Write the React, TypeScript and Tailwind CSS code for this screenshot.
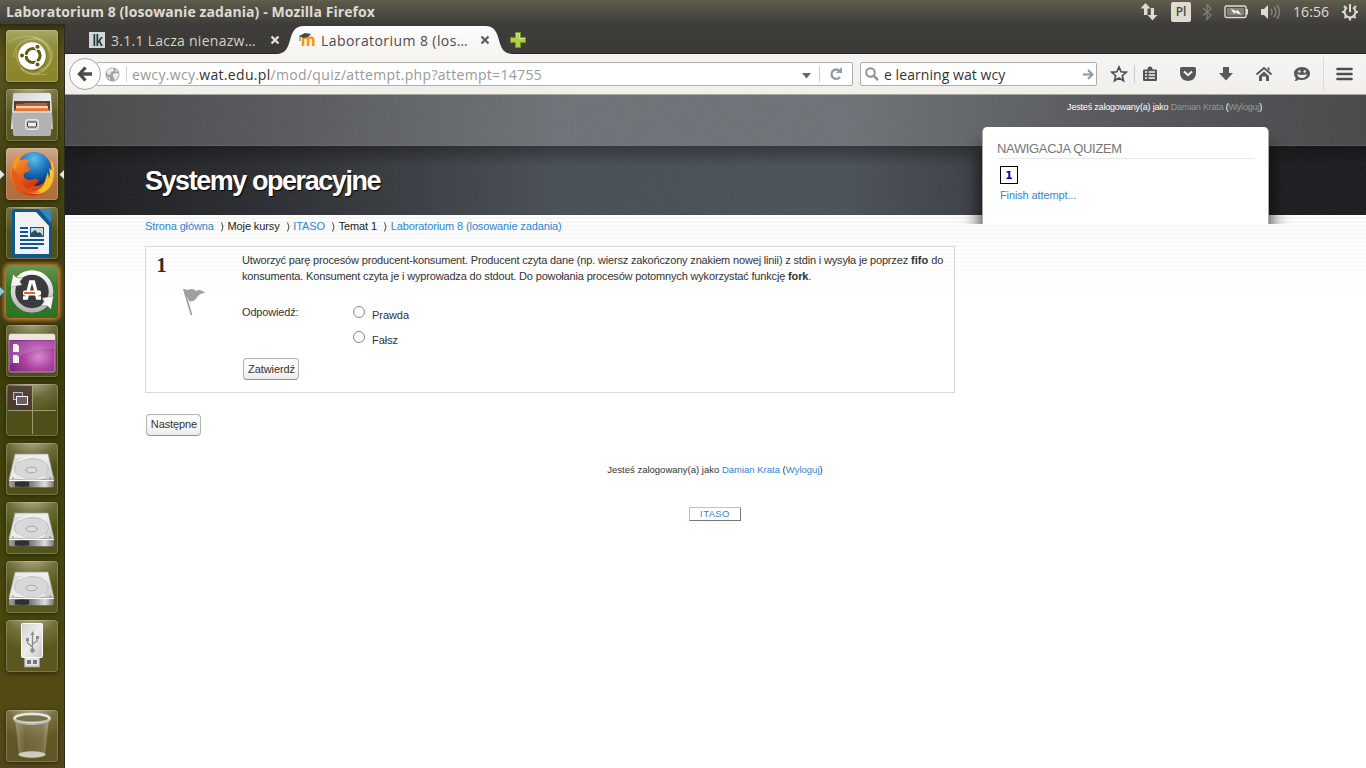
import type { ReactNode } from "react";

const DISPLAY = "font-['Open_Sans','Noto_Sans',sans-serif]";

function Tile({ bg, children, top = "", glow = false }: { bg: string; children: ReactNode; top?: string; glow?: boolean }) {
  return (
    <div
      className={`relative h-[52px] w-[52px] shrink-0 rounded-[4px] ${bg} ${top} ${
        glow ? "shadow-[0_0_4px_2px_#e0803c]" : "shadow-[inset_0_0_0_1px_rgba(255,255,255,0.2),0_1px_4px_rgba(0,0,0,0.5)]"
      }`}
    >
      <svg width="52" height="52" viewBox="0 0 52 52" className="block">
        {children}
      </svg>
    </div>
  );
}

const GLASS =
  "bg-[radial-gradient(46px_36px_at_50%_-6px,rgba(235,235,215,0.7)_0%,rgba(200,200,150,0.32)_55%,rgba(170,170,100,0.15)_100%)]";

function Drive() {
  return (
    <Tile bg={GLASS}>
      <path d="M9 11h33l6 26H3z" fill="url(#metal)" stroke="#aaa" strokeWidth=".6" />
      <path d="M10 12h31l1 3H9z" fill="#f3f3f3" opacity=".6" />
      <ellipse cx="25.500" cy="26" rx="17" ry="10.500" fill="#d8d8d8" stroke="#bababa" strokeWidth=".8" />
      <path d="M12 18l15-5M12 33c6 5 20 5 27 0" stroke="#f7f7f7" strokeWidth="1.200" fill="none" />
      <ellipse cx="25.500" cy="27" rx="5.500" ry="2.800" fill="#ddd" stroke="#a5a5a5" />
      <path d="M3 37h45v5.500q0 2-2 2H5q-2 0-2-2z" fill="url(#front)" stroke="#555" strokeWidth=".5" />
      <path d="M3 37.500h45" stroke="#fff" strokeWidth="1" />
      <rect x="9" y="39" width="14" height="4.500" fill="#303030" />
      <circle cx="7" cy="35" r=".8" fill="#777" />
      <circle cx="44" cy="35" r=".8" fill="#777" />
    </Tile>
  );
}

function Launcher() {
  return (
    <aside className="relative flex w-[65px] shrink-0 flex-col gap-[7px] border-r border-[#292a20] bg-[linear-gradient(180deg,#2f2b10_0px,#4a4516_8px,#5b551f_40px,#454411_130px,#3c3d0b_330px,#43440b_520px,#514a13_670px,#54471a_744px)] pt-[6px] pl-[6px]">
      <svg width="0" height="0" className="absolute">
        <defs>
          <linearGradient id="metal" x1="0" y1="0" x2="1" y2="1">
            <stop offset="0" stopColor="#d0d0d0" />
            <stop offset=".5" stopColor="#ededed" />
            <stop offset="1" stopColor="#c9c9c9" />
          </linearGradient>
          <linearGradient id="front">
            <stop offset="0" stopColor="#aaa" />
            <stop offset=".3" stopColor="#444" />
            <stop offset=".8" stopColor="#ddd" />
            <stop offset="1" stopColor="#777" />
          </linearGradient>
          <linearGradient id="fox" x1="0" y1="0" x2=".5" y2="1">
            <stop offset="0" stopColor="#f7a22b" />
            <stop offset=".5" stopColor="#ee6f1f" />
            <stop offset="1" stopColor="#cf3d12" />
          </linearGradient>
          <radialGradient id="globe" cx=".5" cy=".2" r=".8">
            <stop offset="0" stopColor="#5cc0ec" />
            <stop offset=".5" stopColor="#1b74bd" />
            <stop offset="1" stopColor="#0a2c66" />
          </radialGradient>
          <radialGradient id="violet" cx=".65" cy=".6" r=".7">
            <stop offset="0" stopColor="#d98ad0" />
            <stop offset=".5" stopColor="#a9409f" />
            <stop offset="1" stopColor="#7b2486" />
          </radialGradient>
          <linearGradient id="ring" x1="0" y1="0" x2="0" y2="1">
            <stop offset="0" stopColor="#fafafa" />
            <stop offset="1" stopColor="#b4b4b4" />
          </linearGradient>
          <linearGradient id="bin">
            <stop offset="0" stopColor="#fff" stopOpacity=".3" />
            <stop offset=".3" stopColor="#fff" stopOpacity=".08" />
            <stop offset=".8" stopColor="#fff" stopOpacity=".15" />
            <stop offset="1" stopColor="#fff" stopOpacity=".35" />
          </linearGradient>
        </defs>
      </svg>

      <Tile bg="bg-[linear-gradient(180deg,#aaa765_0%,#8f8c35_35%,#8a8528_100%)]">
        <g fill="none" stroke="#e4e2b0">
          <path d="M8 27C8 8 34 2 44 18c6 9-1 21-11 22" strokeWidth="2" opacity=".25" />
          <path d="M27 7C42 9 50 27 40 38c-7 8-20 8-25 0" strokeWidth="2" opacity=".3" />
          <path d="M11 20c-4 15 10 28 30 24M2 12c20-10 34-6 41 9" opacity=".35" />
        </g>
        <circle cx="26.500" cy="27" r="14" fill="#55511b" opacity=".4" />
        <circle cx="26" cy="26" r="13.800" fill="#fff" />
        <circle cx="27" cy="25.500" r="7" fill="none" stroke="#625e12" strokeWidth="3.200" />
        <path d="M27 25.500L17 25.500M27 25.500L32 34M27 25.500L32 17" stroke="#fff" strokeWidth="1.200" />
        <circle cx="27" cy="25.500" r="5.400" fill="#fff" />
        <g fill="#625e12" stroke="#fff" strokeWidth="1.100">
          <circle cx="16" cy="25.500" r="2.600" />
          <circle cx="31.500" cy="16.800" r="2.600" />
          <circle cx="31.500" cy="34.500" r="2.600" />
        </g>
      </Tile>

      <Tile bg={GLASS}>
        <path d="M7 6q0-2 2-2h34q2 0 2 2l2 34H5z" fill="url(#metal)" />
        <rect x="8" y="12" width="36" height="10" fill="#4b443e" />
        <path d="M10 15h7l1-1h23v8H10z" fill="#c65b20" />
        <path d="M10 17h32v5H10z" fill="#eb8849" />
        <path d="M10 18h32" stroke="#fff" strokeWidth="1.300" />
        <path d="M9 20h34v2H9z" fill="#e9732b" />
        <path d="M9 22h34q3 0 3 2l-1 21q0 2-2 2H9q-2 0-2-2L6 24q0-2 3-2z" fill="#b2b2b2" />
        <path d="M7 23h38" stroke="#f4f4f4" />
        <rect x="19.500" y="30.500" width="13" height="10" rx="2" fill="#c9c9c9" stroke="#e9e9e9" />
        <rect x="21.500" y="33" width="9" height="5" rx="1" fill="#eee" stroke="#333" strokeWidth="1" />
      </Tile>

      <Tile bg="bg-[linear-gradient(180deg,#cda88c,#b47547_60%,#b06c3c)]">
        <circle cx="26" cy="26" r="22" fill="url(#fox)" />
        <circle cx="28" cy="21" r="17" fill="url(#globe)" />
        <path d="M45 12c6 12 2 25-8 30 7-8 8-15 6-22l3 3z" fill="#ffd84a" />
        <path d="M45 12c2 8 1 14-2 19l-1-7-4 12c-5 8-13 9-17 7 13 8 27-1 27-17q0-9-3-14z" fill="#f9bd25" />
        <path d="M11 8c2 1 3 4 4 4 3-1 6-1 9 1-3 1-3 4-3 6l4 1-3 4c-3 0-5 2-4 5 3 4 7 3 11 2l4 1c-5 10-19 11-24 1C3 25 7 13 11 8z" fill="url(#fox)" />
        <path d="M6 20c-2 20 13 29 29 24-12-1-19-5-21-14" fill="#e4561b" opacity=".75" />
        <path d="M8 14c0-4 2-6 4-7l2 5-6 10z" fill="#f5972a" />
      </Tile>

      <Tile bg={GLASS}>
        <path d="M9 2h25l12 13v32q0 3-3 3H9q-3 0-3-3V5q0-3 3-3z" fill="#0e578f" />
        <path d="M33 2h12v14z" fill="#3983bd" />
        <path d="M9 5h21l13 14v28H9z" fill="#f2f2f2" />
        <path d="M14 21h8M14 25h8M14 29h8M14 33h24M14 37h24M14 41h18" stroke="#0e578f" strokeWidth="1.800" />
        <rect x="24.500" y="20.500" width="13" height="9" fill="#bde2f3" stroke="#0e578f" />
        <path d="M25 29v-3l4-3 3 3 2-1 3 4z" fill="#344b4e" />
        <circle cx="34.500" cy="23" r="1.500" fill="#f2d24d" />
      </Tile>

      <Tile glow bg="bg-[linear-gradient(180deg,#67954d,#377a2d_40%,#2d7226)]">
        <circle cx="26" cy="27" r="20" fill="#174414" opacity=".5" />
        <circle cx="26" cy="25.500" r="19" fill="#3b3b3d" stroke="url(#ring)" strokeWidth="4.500" />
        <path d="M4.500 21L7 8l3.500 3.500L17 12l-3 3.500 2 3.500zM47.500 30L45 43.500 41.500 40 35 39.500l3-4-2-3.500z" fill="#f4f4f4" stroke="#3d5b38" strokeWidth=".4" />
        <path d="M20.500 32L24.500 16h3l4 16M17 32h5M30 32h5" fill="none" stroke="#fff" strokeWidth="3.300" />
        <rect x="17" y="24.500" width="18" height="5" rx="1.500" fill="#fff" />
        <rect x="18" y="26" width="11" height="2" fill="#e96325" />
      </Tile>

      <Tile bg={GLASS}>
        <rect x="3" y="9" width="46" height="38" rx="2" fill="url(#violet)" stroke="#df9bd6" strokeWidth=".8" />
        <path d="M3 15v-4q0-2 2-2h42q2 0 2 2v4z" fill="#ece8d9" />
        <path d="M4 16h44v8Q20 22 4 40z" fill="#fff" opacity=".15" />
        <path d="M7 19h4l2 2v6H7zM7 30h4l2 2v6H7z" fill="#f7f4ef" />
      </Tile>

      <Tile bg={GLASS}>
        <rect x="2" y="2" width="24" height="24" fill="#4a3432" opacity=".82" />
        <path d="M26.500 2v48M2 26.500h48" stroke="#aaa97e" strokeWidth="1" opacity=".85" />
        <rect x="7.500" y="8.500" width="9" height="7" fill="#604c50" stroke="#bbb" />
        <rect x="10.500" y="12.500" width="11" height="8" fill="#725c68" stroke="#fff" />
      </Tile>

      <Drive />
      <Drive />
      <Drive />

      <Tile bg={GLASS}>
        <rect x="18.500" y="37" width="15" height="10" fill="#e1e1e1" stroke="#999" />
        <path d="M21 40h4v4h-4zM27 40h4v4h-4z" fill="#777" />
        <rect x="15.500" y="3.500" width="21" height="34" rx="1" fill="url(#metal)" stroke="#fafafa" />
        <g stroke="#8b8b8b" strokeWidth="1.300" fill="none">
          <path d="M26.500 13v17M26.500 27l-5-4v-3M26.500 24l4.500-3v-4" />
        </g>
        <path d="M24.500 15l2-4 2 4zM20 18h3v3h-3zM30 16h3v3h-3z" fill="#8b8b8b" />
        <circle cx="26.500" cy="30.500" r="2.300" fill="#8b8b8b" />
      </Tile>

      <Tile bg={GLASS} top="mt-[31px]">
        <path d="M9 8l4 37q13 6 26 0l4-37z" fill="url(#bin)" />
        <ellipse cx="26" cy="44.500" rx="13.500" ry="3.300" fill="#dedecf" opacity=".85" />
        <ellipse cx="26" cy="8.500" rx="17.500" ry="4.500" fill="#77724a" stroke="#e8e8e8" strokeWidth="2.600" />
        <path d="M8.500 10q17 8 35 0" fill="none" stroke="#b9b9b9" strokeWidth="2" />
      </Tile>

      <svg className="pointer-events-none absolute top-0 left-0" width="65" height="300" viewBox="0 24 65 300">
        <path d="M0 170l4.500 4.500L0 179zM64 170l-4.500 4.500L64 179z" fill="#e8e8e8" />
        <path d="M0 287l4.500 4.500L0 296z" fill="#7cc9ef" />
      </svg>
    </aside>
  );
}

function TopPanel() {
  return (
    <header className={`flex h-6 shrink-0 items-center bg-[linear-gradient(180deg,#64614e_0,#5b584c_2px,#4c4a43_60%,#3e3d38_100%)] pl-[6px] text-[#dfdbd2] ${DISPLAY}`}>
      <h1 className="text-[14px] leading-6 font-bold tracking-[0.080px] whitespace-nowrap">Laboratorium 8 (losowanie zadania) - Mozilla Firefox</h1>
      <svg className="ml-auto" width="18" height="18" viewBox="0 0 18 18" fill="#dfdbd2">
        <path d="M5.500 0L10.500 5.500H7.500V12H4V5.500H.5zM12.500 17.500L7.500 12H10.800V5H14V12H17.500z" />
      </svg>
      <div className="ml-[13px] flex h-5 w-5 items-center justify-center rounded-[2px] bg-[#dfdbd2] text-[12px] font-semibold text-[#4a4842]">Pl</div>
      <svg className="ml-[10px]" width="12" height="18" viewBox="0 0 12 18" fill="none" stroke="#807d75" strokeWidth="1.300">
        <path d="M2 5l8 7-4 4.500V1.500L10 5.500 2 12.500" />
      </svg>
      <svg className="ml-[11px]" width="26" height="16" viewBox="0 0 26 16">
        <rect x="1" y="2" width="21" height="11.500" rx="1.500" fill="none" stroke="#dfdbd2" strokeWidth="1.400" />
        <rect x="3" y="4" width="17" height="7.500" fill="#85827a" />
        <rect x="22" y="5" width="2" height="5.500" fill="#dfdbd2" />
        <path d="M6.500 4.300l6 3 1-1.500L17.500 11 11 8.500l-1 1.500z" fill="#f4f2ec" />
      </svg>
      <svg className="ml-[10px]" width="22" height="18" viewBox="0 0 22 18" fill="none">
        <path d="M1 6h3l4-4v14l-4-4H1z" fill="#dfdbd2" />
        <path d="M11 6q2 3 0 6M14 4q4 5 0 10M17 2q5 7 0 14" stroke="#85827a" strokeWidth="1.500" />
      </svg>
      <span className="ml-[11px] w-[37px] text-[14px] leading-6 tracking-[0.100px]">16:56</span>
      <svg className="mr-[7px] ml-[11px]" width="18" height="18" viewBox="0 0 18 18" fill="none" stroke="#dfdbd2">
        <path d="M6 4.300a5.500 5.500 0 1 0 6 0" strokeWidth="2" />
        <path d="M9 1v8" strokeWidth="2" />
        <path d="M4.500 4.500L3 3M13.500 4.500L15 3M3.500 9H1M14.500 9H17M5 13.500L3.500 15M13 13.500L14.500 15M9 15v2.500" strokeWidth="2.200" />
      </svg>
    </header>
  );
}

function Cross({ color }: { color: string }) {
  return (
    <svg width="10" height="10" viewBox="0 0 10 10">
      <path d="M1.500 1.500l7 7M8.500 1.500l-7 7" stroke={color} strokeWidth="2.300" />
    </svg>
  );
}

function Tabs() {
  return (
    <div className={`flex h-[30px] shrink-0 bg-[linear-gradient(180deg,#3d3c38_0px,#3c3b37_29px,#262522_29px)] text-[14px] ${DISPLAY}`}>
      <div className="flex w-[219px] items-center pt-[2px] pl-6 text-[#d3d1c8]">
        <div className="flex h-4 w-4 items-center justify-center bg-[#d3d7d4] text-[#1c3b40]">
          <span className="scale-x-75 text-[16px] leading-4 font-bold tracking-[-1px]">lk</span>
        </div>
        <span className="ml-[6px] w-[159px] tracking-[0.270px] whitespace-nowrap">3.1.1 Lacza nienazw…</span>
        <Cross color="#e3e1d9" />
      </div>
      <div className="relative flex w-[223px] items-center pt-[2px] text-[#4c4c4c]">
        <svg className="absolute -left-[8px] top-0" width="242" height="30" viewBox="0 0 242 30">
          <defs>
            <linearGradient id="tabFill" x1="0" y1="0" x2="0" y2="1">
              <stop offset="0" stopColor="#fdfdfd" />
              <stop offset="1" stopColor="#f5f4f3" />
            </linearGradient>
          </defs>
          <path d="M0 30C20 30 8 2 28 2H209C229 2 217 30 237 30z" fill="url(#tabFill)" />
        </svg>
        <svg className="relative ml-[15px]" width="17" height="16" viewBox="0 0 17 16">
          <path d="M4 14V8q0-2.500 2.500-2.500T9 8v6M9 8q0-2.500 2.500-2.500T14.300 8v6" fill="none" stroke="#f49a18" strokeWidth="2.700" />
          <path d="M0 4l6-3 6 1-3 3-5 1z" fill="#474747" />
          <path d="M1 4v5" stroke="#666" />
        </svg>
        <span className="relative ml-[5px] w-[159px] tracking-[0.420px] whitespace-nowrap">Laboratorium 8 (los…</span>
        <span className="relative">
          <Cross color="#5f5f5f" />
        </span>
      </div>
      <svg className="relative mt-2 ml-[3px]" width="16" height="16" viewBox="0 0 16 16">
        <path d="M5.500.5h5v5h5v5h-5v5h-5v-5h-5v-5h5z" fill="#b2cd4c" stroke="#6d9a1f" />
        <path d="M6.500 5.500v-4h3v5h5" fill="none" stroke="#d5ec83" />
      </svg>
    </div>
  );
}

function Toolbar() {
  return (
    <div className={`flex h-[41px] shrink-0 items-center border-b border-[#a8a59a] bg-[linear-gradient(180deg,#f6f5f4,#f0efed)] text-[14px] ${DISPLAY}`}>
      <div className="relative z-10 ml-1 flex h-8 w-8 shrink-0 items-center justify-center rounded-full border border-[#a5a5a1] bg-[#fcfcfb]">
        <svg width="16" height="16" viewBox="0 0 16 16">
          <path d="M8.500 1.500L2.500 8l6 6.500M3 8h12" fill="none" stroke="#4b4b4b" strokeWidth="3.300" />
        </svg>
      </div>
      <div className="-ml-[5px] flex h-6 w-[757px] items-center rounded-[2px] border border-[#b1aea8] bg-white text-[#999]">
        <svg className="ml-[8px]" width="15" height="15" viewBox="0 0 15 15">
          <circle cx="7.500" cy="7.500" r="7" fill="#a4a4a4" />
          <path d="M4 2l4-1 1 3-3 1-1 3-3-1V4zM8 7l4-1 2 1-2 5-2 1-2-4zM2 9l3 2v2l-2-2zM10 2l3 2-2 1z" fill="#ececec" />
        </svg>
        <div className="ml-[6px] h-4 w-px bg-[#d2d2d2]" />
        <span className="ml-[5px] tracking-[0.320px] whitespace-nowrap">
          ewcy.wcy.<span className="text-[#333]">wat.edu.pl</span>/mod/quiz/attempt.php?attempt=14755
        </span>
        <svg className="mt-[3px] ml-auto" width="9" height="6" viewBox="0 0 9 6">
          <path d="M0 0h9L4.500 5.500z" fill="#666" />
        </svg>
        <div className="ml-[8px] h-4 w-px bg-[#ccc]" />
        <svg className="mr-[9px] ml-[9px]" width="14" height="14" viewBox="0 0 14 14">
          <path d="M10.500 3.800A4.700 4.700 0 1 0 11 10" fill="none" stroke="#8d9cab" strokeWidth="2.300" />
          <path d="M7 6h6V0z" fill="#8d9cab" />
        </svg>
      </div>
      <div className="ml-[7px] flex h-6 w-[237px] items-center rounded-[2px] border border-[#b1aea8] bg-white text-[#333]">
        <svg className="ml-1" width="14" height="14" viewBox="0 0 14 14" fill="none" stroke="#929292" strokeWidth="2">
          <circle cx="5.500" cy="5.500" r="4.300" />
          <path d="M8.800 8.800L13 13" strokeWidth="2.500" />
        </svg>
        <span className="ml-[5px] tracking-[0.060px] whitespace-nowrap">e learning wat wcy</span>
        <svg className="mr-[2px] ml-auto" width="11" height="11" viewBox="0 0 11 11" fill="none" stroke="#8b98a8" strokeWidth="2">
          <path d="M0 5.500h9M5 1l4.500 4.500L5 10" />
        </svg>
      </div>
      <svg className="ml-[13px]" width="18" height="18" viewBox="0 0 18 18">
        <path d="M9 2l2.100 4.800 5.100.5-3.900 3.400 1.200 5.100L9 13.100l-4.500 2.700 1.200-5.100L1.800 7.300l5.100-.5z" fill="none" stroke="#4f4f4f" strokeWidth="1.700" />
      </svg>
      <div className="ml-[6px] h-[18px] w-px bg-[#c4cdd5]" />
      <svg className="ml-[7px]" width="16" height="16" viewBox="0 0 16 16">
        <path d="M2 3.500h3.500Q5.500.5 8 .5t2.500 3H14q1 0 1 1V14q0 1-1 1H2q-1 0-1-1V4.500q0-1 1-1z" fill="#555" />
        <path d="M3 6h2M6.500 6H13M3 9h2M6.500 9H13M3 12h2M6.500 12H13" stroke="#f5f5f5" strokeWidth="1.600" />
      </svg>
      <svg className="ml-[21px]" width="18" height="16" viewBox="0 0 18 16">
        <path d="M2.500 1h13q1.500 0 1.500 1.500V7q0 7-8 8-8-1-8-8V2.500Q1 1 2.500 1z" fill="#585858" />
        <path d="M5 5.500l4 3.700 4-3.700" fill="none" stroke="#f3f3f3" strokeWidth="2" />
      </svg>
      <svg className="ml-[21px]" width="16" height="16" viewBox="0 0 16 16">
        <path d="M5 1h6v6h4l-7 7.500L1 7h4z" fill="#585858" />
      </svg>
      <svg className="ml-[21px]" width="18" height="16" viewBox="0 0 18 16">
        <path d="M1.500 8.500L9 2l7.500 6.500" fill="none" stroke="#555" strokeWidth="1.800" />
        <path d="M12.500 1.500H14.500V5l-2-1.500zM4 10L9 5.500 14 10v5h-3v-4.500H7V15H4z" fill="#5b5b5b" />
      </svg>
      <svg className="ml-[20px]" width="18" height="16" viewBox="0 0 18 16">
        <path d="M9 1c5 0 8 3 8 6.500S14 14 9 14q-2 0-3-.5Q4 15 1.500 15q1.500-1.500 1.200-3Q1 10 1 7.500C1 4 4 1 9 1z" fill="#585858" />
        <circle cx="6.300" cy="5.500" r="1.200" fill="#f2f2f2" />
        <circle cx="11.700" cy="5.500" r="1.200" fill="#f2f2f2" />
        <path d="M4 8.300q5 1.300 10 0-1 3.700-5 3.700T4 8.300z" fill="#f2f2f2" />
      </svg>
      <div className="ml-[12px] h-[34px] w-px bg-[#dad9d7]" />
      <svg className="ml-[12px]" width="17" height="14" viewBox="0 0 17 14">
        <path d="M1.500 2h14M1.500 7h14M1.500 12h14" stroke="#4e4e4e" strokeWidth="2.600" strokeLinecap="round" />
      </svg>
    </div>
  );
}

function Login({ className, link }: { className: string; link: string }) {
  return (
    <p className={className}>
      Jesteś zalogowany(a) jako <a className={link}>Damian Krata</a> (<a className={link}>Wyloguj</a>)
    </p>
  );
}

function QuizNav() {
  return (
    <section className="mt-[14px] -mr-[7px] h-[97px] w-[287px] [clip-path:inset(-10px_-24px_0px_-24px)]">
      <div className="h-full rounded-t-[5px] border-x border-[#aaa] bg-white px-[14px] shadow-[0_22px_20px_rgba(0,0,0,0.9)]">
        <h2 className="h-8 border-b border-[#e8e8e8] pt-[14px] text-[13px] leading-4 tracking-[-0.340px] text-[#777]">NAWIGACJA QUIZEM</h2>
        <div className="mt-[7px] ml-[3px] flex h-[18px] w-[18px] items-center justify-center border border-black font-['DejaVu_Sans',sans-serif] text-[10.500px] leading-4 font-bold text-[#0000c8]">1</div>
        <a className="mt-[3px] ml-[3px] block text-[11px] leading-4 tracking-[-0.120px] text-[#2f86d2]">Finish attempt...</a>
      </div>
    </section>
  );
}

function Hero() {
  return (
    <div className="relative h-[120px] shrink-0 bg-[linear-gradient(180deg,rgba(0,0,0,0)_50px,rgba(120,120,120,0.3)_50px,rgba(120,120,120,0.3)_51px,rgba(0,0,0,0)_51px),linear-gradient(90deg,#464648_0%,#55575a_17%,#6b7176_38%,#6b7176_60%,#54565a_80%,#454547_100%)]">
      <div className="absolute inset-x-0 top-[51px] h-[69px] bg-[linear-gradient(180deg,rgba(0,0,0,0.35),rgba(0,0,0,0)_20px),linear-gradient(90deg,#17181a_0%,#292c30_17%,#464c54_38%,#484e56_60%,#2a2d32_80%,#17181b_95%)]" />
      <svg className="absolute inset-0 opacity-[0.10]" width="100%" height="120">
        <filter id="grain">
          <feTurbulence type="fractalNoise" baseFrequency=".7" numOctaves="2" />
          <feColorMatrix type="saturate" values="0" />
        </filter>
        <rect width="100%" height="120" filter="url(#grain)" />
      </svg>
      <div className="relative flex justify-between pr-[104px] pl-20">
        <h1 className="mt-[70px] text-[27px] leading-8 font-bold tracking-[-1.450px] text-white [text-shadow:1px_1px_1px_#000]">Systemy operacyjne</h1>
        <div className="flex flex-col items-end">
          <Login className="mt-[6px] h-[12px] text-[9px] leading-3 tracking-[-0.190px] text-white" link="text-[#94969b]" />
          <QuizNav />
        </div>
      </div>
    </div>
  );
}

const BUTTON =
  "rounded-[4px] border border-[#b5b2ad] border-b-[#96938e] bg-[linear-gradient(180deg,#fefefe,#f9f9f9_50%,#ebebea)] pl-px text-[11px] tracking-[-0.100px] text-[#333]";

function Radio({ label }: { label: string }) {
  return (
    <div className="flex h-[25px]">
      <span className="h-[12px] w-[12px] rounded-full border border-[#88867f] bg-white" />
      <span className="mt-[1px] ml-[7px] leading-4 tracking-[-0.050px]">{label}</span>
    </div>
  );
}

const CRUMBS = [
  { label: "Strona główna", link: true, gap: "mr-[7.200px]" },
  { label: "Moje kursy", link: false, gap: "mr-[7.200px]" },
  { label: "ITASO", link: true, gap: "mr-[7.200px]" },
  { label: "Temat 1", link: false, gap: "mr-[7.200px]" },
  { label: "Laboratorium 8 (losowanie zadania)", link: true, gap: "" },
];

function Page() {
  return (
    <main className="flex min-h-0 flex-1 flex-col bg-white font-['Liberation_Sans',Arial,sans-serif] text-[11px] text-[#333]">
      <Hero />
      <div className="flex-1 bg-[linear-gradient(180deg,rgba(255,255,255,0)_0px,rgba(255,255,255,1)_80px),repeating-linear-gradient(180deg,#fdfdfd_0px,#fdfdfd_2px,#f5f5f5_2px,#f5f5f5_4px)] pl-20">
        <nav className="flex h-[31px] pt-[3px] leading-4 tracking-[-0.120px]">
          {CRUMBS.map((c, i) => (
            <span key={c.label} className={`flex ${c.gap}`}>
              {i > 0 && (
                <svg className="mt-[4px] mr-[3.600px]" width="3" height="10" viewBox="0 0 3 10">
                  <path d="M.5.5q3 4.500 0 9" fill="none" stroke="#333" strokeWidth=".9" />
                </svg>
              )}
              <span className={c.link ? "text-[#2f86d2]" : "text-[#222]"}>{c.label}</span>
            </span>
          ))}
        </nav>

        <section className="flex h-[147px] w-[810px] border border-[#d9d9d9] tracking-[-0.165px]">
          <div className="w-24 shrink-0 pl-[10.500px]">
            <div className="pt-[7px] font-['Liberation_Serif',serif] text-[20px] leading-[22px] font-bold text-[#35291d]">1</div>
            <svg className="mt-[12px] ml-[26px]" width="24" height="28" viewBox="0 0 24 28">
              <path d="M1 1.500L8.500 27" stroke="#999" strokeWidth="1.600" />
              <path d="M0 1q4 1.500 7 .3T13 3q4-3 9.500 2-6 0-9 5-2 3.500-7 3.500z" fill="#a0a0a0" />
            </svg>
          </div>
          <div className="pt-[5px]">
            <p className="leading-4 whitespace-nowrap">
              Utworzyć parę procesów producent-konsument. Producent czyta dane (np. wiersz zakończony znakiem nowej linii) z stdin i wysyła je poprzez{" "}
              <b className="tracking-[0.100px]">fifo</b> do
              <br />
              konsumenta. Konsument czyta je i wyprowadza do stdout. Do powołania procesów potomnych wykorzystać funkcję <b>fork</b>.
            </p>
            <div className="mt-[22px] flex">
              <span className="-mt-[2px] w-[111px] leading-4">Odpowiedź:</span>
              <div>
                <Radio label="Prawda" />
                <Radio label="Fałsz" />
              </div>
            </div>
            <button className={`mt-[2px] ml-[1px] block h-[22px] w-[56px] leading-[19px] ${BUTTON}`}>Zatwierdź</button>
          </div>
        </section>

        <button className={`mt-[21px] ml-[1px] block h-[22px] w-[55px] pb-[2px] leading-[18px] ${BUTTON}`}>Następne</button>

        <footer className="-ml-20 flex flex-col items-center pr-px">
          <Login className="mt-[28px] text-[9.500px] leading-3 whitespace-nowrap" link="text-[#2f86d2]" />
          <a className="mt-[31px] h-[14px] w-[52px] border border-[#c0c0c0] border-r-[#777] border-b-[#777] text-center text-[9.500px] leading-3 tracking-[0.4px] text-[#2f86d2]">ITASO</a>
        </footer>
      </div>
    </main>
  );
}

export default function App() {
  return (
    <div className="flex h-[768px] w-[1366px] flex-col overflow-hidden bg-white">
      <TopPanel />
      <div className="flex min-h-0 flex-1">
        <Launcher />
        <div className="flex min-w-0 flex-1 flex-col">
          <Tabs />
          <Toolbar />
          <Page />
        </div>
      </div>
    </div>
  );
}
